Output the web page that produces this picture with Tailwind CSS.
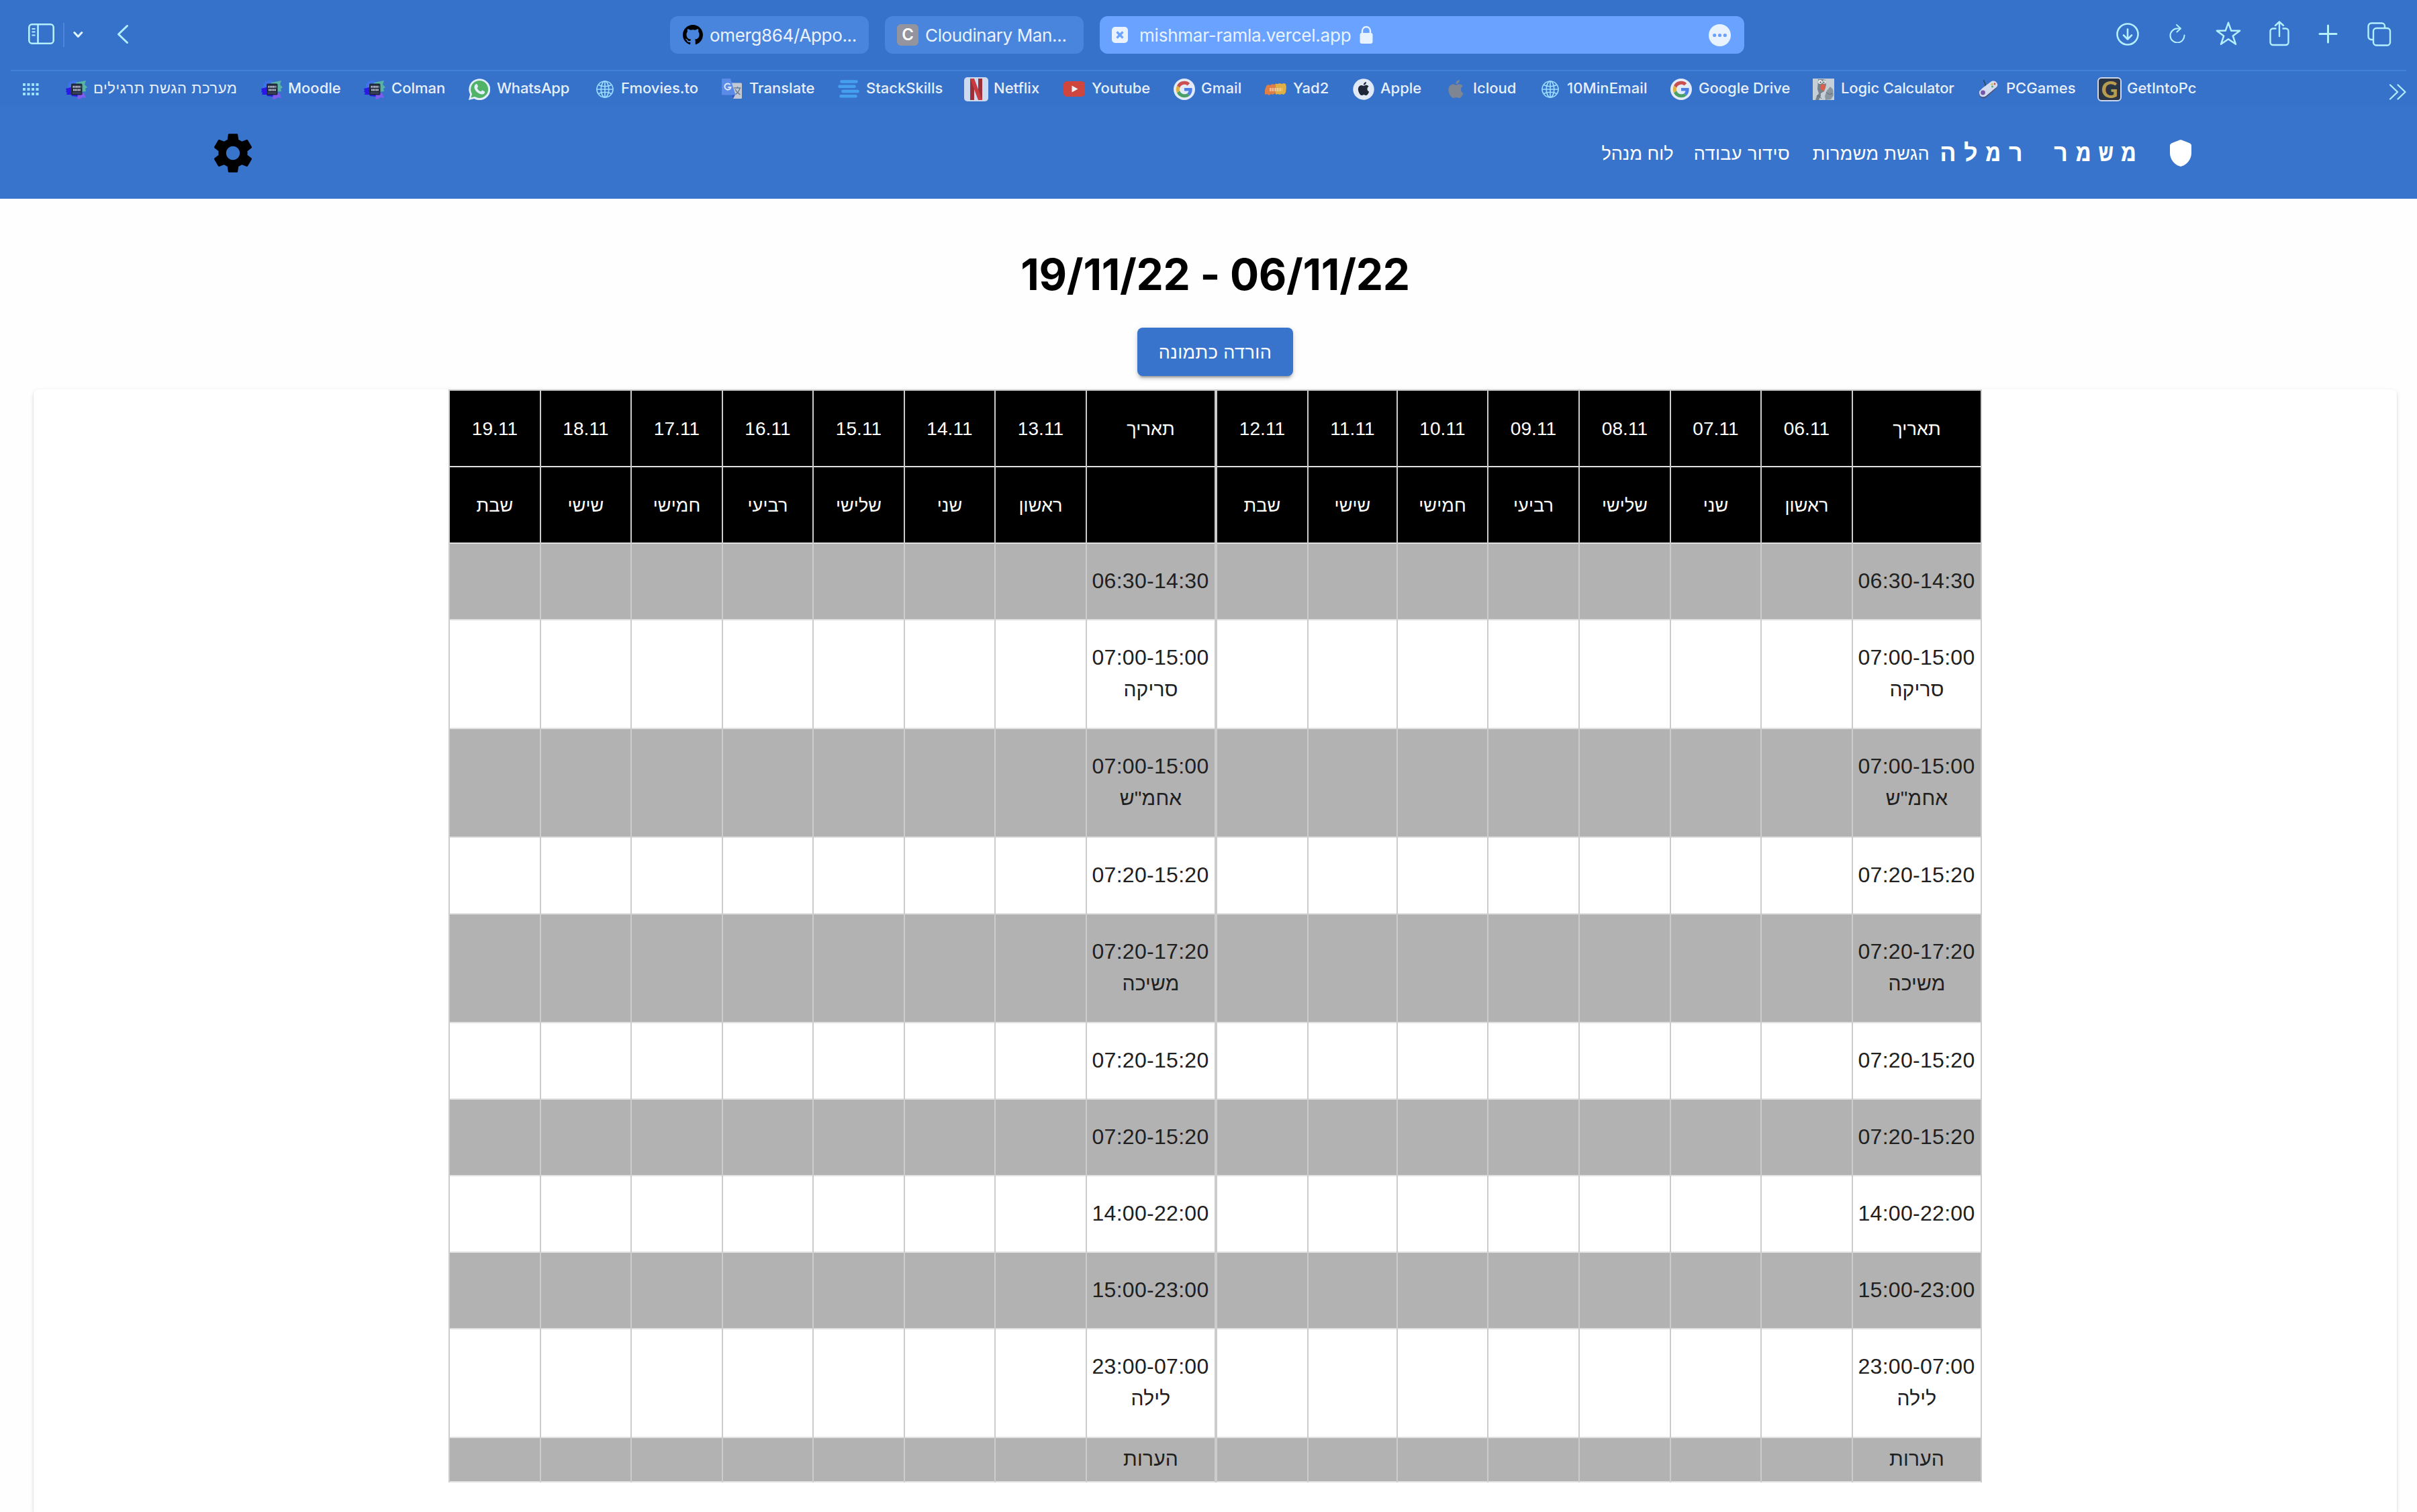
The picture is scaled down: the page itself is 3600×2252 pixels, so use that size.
<!DOCTYPE html>
<html lang="he">
<head>
<meta charset="utf-8">
<title>משמר רמלה</title>
<script src="https://cdn.jsdelivr.net/npm/@tailwindcss/browser@4"></script>
</head>
<body class="bg-white">
<svg class="hidden" xmlns="http://www.w3.org/2000/svg">
  <symbol id="college" viewBox="0 0 32 30">
    <path fill="#3f74ea" d="M4 5l2 1 0-4 3 2 2-4 2 3 3-2 3 6-2 9-13 2-1-8z"/>
    <path fill="#58b5a4" d="M15 5l15-3-2 6 4 4-3 2 1 4-9 1-7-9z"/>
    <path fill="#2a18e6" d="M0 14l8-2 6 8 5 3-1 3-9-1-1-2-7 0 1-3-2-1 1-2z"/>
    <path fill="#7f5cf0" d="M18 22l9-2 3 8-5-1-5 3-3-1z"/>
    <rect x="8" y="6.500" width="16.500" height="17" rx="1.500" fill="#20293d"/>
    <path stroke="#c9cedb" stroke-width="3" stroke-dasharray="1.600 .7" d="M10.500 11.300h12M11 16h11"/>
    <path stroke="#59627a" stroke-width="1" d="M10 20.500h12.500"/>
  </symbol>
  <symbol id="globe" viewBox="0 0 26 26">
    <g fill="none" stroke="#9bdcff" stroke-width="1.700"><circle cx="13" cy="13" r="12"/><ellipse cx="13" cy="13" rx="5.800" ry="12"/><path d="M13 1v24M1 13h24M3.500 6.500c5 3 14 3 19 0M3.500 19.500c5-3 14-3 19 0"/></g>
  </symbol>
  <symbol id="google" viewBox="0 0 32 32">
    <circle cx="16" cy="16" r="16" fill="#e3ebf8"/>
    <g transform="translate(3.800 3.800) scale(.508)">
      <path fill="#c9504f" d="M24 9.500c3.540 0 6.710 1.220 9.210 3.600l6.850-6.850C35.900 2.380 30.470 0 24 0 14.620 0 6.510 5.380 2.560 13.220l7.980 6.190C12.430 13.720 17.740 9.500 24 9.500z"/>
      <path fill="#4b7fe6" d="M46.980 24.550c0-1.570-.15-3.090-.38-4.550H24v9.020h12.940c-.58 2.960-2.260 5.480-4.780 7.180l7.730 6c4.510-4.180 7.090-10.360 7.090-17.650z"/>
      <path fill="#e0b23f" d="M10.530 28.590c-.48-1.450-.76-2.990-.76-4.590s.27-3.140.76-4.590l-7.980-6.190C.92 16.460 0 20.120 0 24c0 3.880.92 7.540 2.560 10.780l7.970-6.190z"/>
      <path fill="#4ba067" d="M24 48c6.480 0 11.930-2.130 15.890-5.810l-7.730-6c-2.150 1.450-4.920 2.300-8.160 2.300-6.260 0-11.570-4.220-13.470-9.910l-7.980 6.190C6.510 42.620 14.620 48 24 48z"/>
    </g>
  </symbol>
  <symbol id="apple" viewBox="0 0 24 24">
    <path d="M12.152 6.896c-.948 0-2.415-1.078-3.960-1.040-2.040.027-3.910 1.183-4.961 3.014-2.117 3.675-.546 9.103 1.519 12.090 1.013 1.454 2.208 3.090 3.792 3.039 1.520-.065 2.090-.987 3.935-.987 1.831 0 2.350.987 3.960.948 1.637-.026 2.676-1.480 3.676-2.948 1.156-1.688 1.636-3.325 1.662-3.415-.039-.013-3.182-1.221-3.220-4.857-.026-3.040 2.480-4.494 2.597-4.559-1.429-2.090-3.623-2.324-4.390-2.376-2-.156-3.675 1.090-4.610 1.090zM15.530 3.830c.843-1.012 1.400-2.427 1.245-3.830-1.207.052-2.662.805-3.532 1.818-.780.896-1.454 2.338-1.273 3.714 1.338.104 2.715-.688 3.559-1.701"/>
  </symbol>
</svg>

<div class="flex h-[2252px] w-[3600px] flex-col overflow-hidden bg-[#fefefe]">

  <!-- Browser chrome -->
  <div class="flex h-[159px] shrink-0 flex-col bg-[#3672ca]">
    <div class="flex h-[104px] items-start">
      <div class="flex w-[998px] shrink-0 pl-[42px] pt-[34px]">
        <svg class="h-[33px] w-[40px]" viewBox="0 0 40 33" fill="none" stroke="#b4efff" stroke-width="2.600"><rect x="1.300" y="2.300" width="36.400" height="28.400" rx="4.500"/><path d="M14.500 2v29"/><path stroke-width="2" d="M5.500 9h5M5.500 13.500h5M5.500 18.500h5"/></svg>
        <div class="ml-3 h-9 w-0.5 bg-[#4a86de]"></div>
        <svg class="ml-[13px] mt-3 h-[12px] w-[15px]" viewBox="0 0 15 12" fill="none" stroke="#dff8ff" stroke-width="3" stroke-linecap="round" stroke-linejoin="round"><path d="M1.800 2.500l5.500 6 5.500-6"/></svg>
        <svg class="ml-[50px] mt-[2px] h-[30px] w-[18px]" viewBox="0 0 18 30" fill="none" stroke="#b4efff" stroke-width="3" stroke-linecap="round" stroke-linejoin="round"><path d="M15.500 2.500L2.500 15l13 12.500"/></svg>
      </div>
      <div class="flex shrink-0 gap-6 pt-6 font-['Inter',sans-serif] text-[26px] leading-[56px] tracking-[-0.35px] text-[#e9f2ff]">
        <div class="flex h-14 w-[296px] items-center rounded-xl bg-[#4985dd] pl-[19px]">
          <svg class="h-[30px] w-[30px]" viewBox="0 0 16 16"><path d="M8 0C3.580 0 0 3.580 0 8c0 3.540 2.290 6.530 5.470 7.590.4.070.55-.17.55-.38 0-.19-.01-.82-.01-1.490-2.010.37-2.530-.49-2.690-.94-.09-.23-.48-.94-.82-1.130-.28-.15-.68-.52-.01-.53.63-.01 1.080.58 1.230.82.72 1.210 1.870.87 2.330.66.07-.52.28-.87.51-1.070-1.780-.2-3.640-.89-3.640-3.950 0-.87.31-1.590.82-2.150-.08-.2-.36-1.020.08-2.120 0 0 .67-.21 2.200.82.64-.18 1.320-.27 2-.27s1.360.09 2 .27c1.530-1.040 2.200-.82 2.200-.82.44 1.100.16 1.920.08 2.120.51.56.82 1.270.82 2.150 0 3.070-1.870 3.750-3.650 3.950.29.25.54.73.54 1.480 0 1.070-.01 1.930-.01 2.200 0 .21.15.46.55.38A8.010 8.010 0 0 0 16 8c0-4.420-3.580-8-8-8z"/></svg>
          <span class="ml-[10px] mt-0.5 whitespace-nowrap">omerg864/Appo...</span>
        </div>
        <div class="flex h-14 w-[296px] items-center rounded-xl bg-[#4985dd] pl-[18px]">
          <span class="flex h-8 w-8 items-center justify-center rounded-md bg-[#93949e] text-[24px] font-semibold leading-none text-white">C</span>
          <span class="ml-[10px] mt-0.5 whitespace-nowrap">Cloudinary Man...</span>
        </div>
        <div class="flex h-14 w-[960px] items-center rounded-xl bg-[#69a3ff] pl-[18px] pr-5">
          <svg class="h-6 w-6" viewBox="0 0 24 24"><rect width="24" height="24" rx="5" fill="#e9f2ff"/><path d="M7.500 7.500l9 9M16.500 7.500l-9 9" stroke="#69a3ff" stroke-width="3.200"/></svg>
          <span class="ml-[17px] mt-0.5 whitespace-nowrap tracking-[-0.22px]">mishmar-ramla.vercel.app</span>
          <svg class="ml-[13px] h-[28px] w-5" viewBox="0 0 20 28"><rect x="0.500" y="11" width="19" height="16" rx="3" fill="#e9f2ff"/><path d="M4 12V8a6 6 0 0 1 12 0v4" fill="none" stroke="#e9f2ff" stroke-width="2.400"/></svg>
          <svg class="ml-auto h-[33px] w-[33px]" viewBox="0 0 33 33"><circle cx="16.500" cy="16.500" r="16.500" fill="#e9f2ff"/><g fill="#69a3ff"><circle cx="8.700" cy="16.500" r="2.600"/><circle cx="16.500" cy="16.500" r="2.600"/><circle cx="24.300" cy="16.500" r="2.600"/></g></svg>
        </div>
      </div>
      <div class="ml-auto flex shrink-0 items-start pr-[38px] pt-[30px]">
        <svg class="mt-1 h-[34px] w-[34px]" viewBox="0 0 34 34" fill="none" stroke="#b4efff" stroke-width="2.600" stroke-linecap="round" stroke-linejoin="round"><circle cx="17" cy="17" r="15.500"/><path d="M17 9.500v15M11 18.500l6 6 6-6"/></svg>
        <svg class="ml-[44px] mt-[5px] h-[29px] w-[26px]" viewBox="0 0 26 29" fill="none" stroke="#b4efff" stroke-width="2.100" stroke-linecap="round" stroke-linejoin="round"><path d="M17 7.500H13a10.500 10.500 0 1 0 10.500 10"/><path d="M12 2l6 5.500-5.500 5"/></svg>
        <svg class="ml-[43px] mt-[1px] h-[37px] w-[40px]" viewBox="0 0 40 37" fill="none" stroke="#b4efff" stroke-width="2.500" stroke-linejoin="round"><path d="M20 2.800l4.300 12h12.800L26.800 22.500l4.200 12.300L20 27.300 9 34.800l4.200-12.300L2.900 14.800h12.800z"/></svg>
        <svg class="ml-[41px] mt-[1px] h-[38px] w-[30px]" viewBox="0 0 30 38" fill="none" stroke="#b4efff" stroke-width="2.400" stroke-linecap="round" stroke-linejoin="round"><path d="M9.500 11.500H5.500a4 4 0 0 0-4 4V32a4 4 0 0 0 4 4h19a4 4 0 0 0 4-4V15.500a4 4 0 0 0-4-4h-4M15 1.500V23M9 7l6-5.500L21 7"/></svg>
        <svg class="ml-[43px] mt-[6px] h-[29px] w-[29px]" viewBox="0 0 29 29" fill="none" stroke="#b4efff" stroke-width="3" stroke-linecap="round"><path d="M14.500 2v25M2 14.500h25"/></svg>
        <svg class="ml-[44px] mt-[3px] h-[36px] w-[36px]" viewBox="0 0 36 36" fill="none" stroke="#b4efff" stroke-width="2.400"><path d="M9 26H6a4.500 4.500 0 0 1-4.500-4.500V6A4.500 4.500 0 0 1 6 1.500h15.500A4.500 4.500 0 0 1 26 6v3"/><rect x="9" y="9" width="25" height="25.500" rx="4.500"/></svg>
      </div>
    </div>
    <div class="mx-4 h-0.5 bg-[#427fd9]"></div>

    <div class="flex h-[53px] items-center font-['Inter',sans-serif] text-[22px] font-medium leading-none text-[#e7effb]">
      <svg class="ml-[33px] mr-[39px] h-5 w-[26px] shrink-0" viewBox="0 0 26 20" fill="#9fe2ff"><path d="M1 1h4v4H1zM7.500 1h4v4h-4zM14 1h4v4h-4zM20.500 1h4v4h-4zM1 8h4v4H1zM7.500 8h4v4h-4zM14 8h4v4h-4zM20.500 8h4v4h-4zM1 15h4v4H1zM7.500 15h4v4h-4zM14 15h4v4h-4zM20.500 15h4v4h-4z"/></svg>
      <div class="flex w-[291px] shrink-0 items-center"><svg class="mr-[9px] h-[30px] w-8"><use href="#college"/></svg><span dir="rtl" class="mb-0.5 whitespace-nowrap font-['Liberation_Sans',sans-serif] text-[22px] tracking-[0.55px]">מערכת הגשת תרגילים</span></div>
      <div class="flex w-[153px] shrink-0 items-center"><svg class="mr-2 h-[30px] w-8"><use href="#college"/></svg><span class="mb-[3px]">Moodle</span></div>
      <div class="flex w-[156px] shrink-0 items-center"><svg class="mr-[9px] h-[30px] w-8"><use href="#college"/></svg><span class="mb-[3px]">Colman</span></div>
      <div class="flex w-[190px] shrink-0 items-center"><svg class="mr-[10px] h-8 w-8" viewBox="0 0 32 32"><path fill="#e3eefa" d="M0 32l2.200-8.200A16 16 0 1 1 8.200 30z"/><path fill="#50b368" d="M3.500 28.500l1.600-5.600A13 13 0 1 1 9.200 27z"/><path fill="#e3eefa" d="M10.500 8.500c.8-.8 1.800-.7 2.200.1l1.400 3.200c.3.700-1.500 2-1.300 2.600 1 2.200 2.800 3.900 5 4.900.7.300 1.900-2 2.700-1.700l3.200 1.600c.8.500.4 2.200-.6 3.200-1.500 1.500-4 1.400-6.600.3-3.700-1.600-6.600-4.700-7.700-8-.7-2.400-.2-4.600 1.700-6.200z"/></svg><span class="mb-[3px] tracking-[-0.2px]">WhatsApp</span></div>
      <div class="flex w-[187px] shrink-0 items-center"><svg class="mr-[11px] h-[26px] w-[26px]"><use href="#globe"/></svg><span class="mb-[3px]">Fmovies.to</span></div>
      <div class="flex w-[173px] shrink-0 items-center"><svg class="mr-[10px] h-[31px] w-[31px]" viewBox="0 0 31 31"><path fill="#c3c9d3" d="M12 6.500h16.500A1.500 1.500 0 0 1 30 8v20.500a1.500 1.500 0 0 1-1.500 1.500H17z"/><path fill="#3a50c0" d="M15 24l5 0-3 6z"/><path fill="#5b8be8" d="M1.500 0H13l7.500 24.500H1.500A1.500 1.500 0 0 1 0 23V1.500A1.500 1.500 0 0 1 1.500 0z"/><path fill="none" stroke="#dbe7fb" stroke-width="2" d="M12.500 9a4.600 4.600 0 1 0 1 4H9.300"/><path fill="none" stroke="#6b7f98" stroke-width="1.500" d="M18 14h10.500M23.500 12v2M27 14c-1 5-4 8-6.500 9.500M20 16c2 4 4 6 7.500 8"/></svg><span class="mb-[3px]">Translate</span></div>
      <div class="flex w-[188px] shrink-0 items-center"><svg class="mr-[10px] h-[27px] w-8" viewBox="0 0 32 27" stroke="#46a0f2" stroke-width="4.600" stroke-linecap="round"><path d="M5.500 2.500h22M2.500 9.800h22M7.500 17h22M4.500 24.200h22"/></svg><span class="mb-[3px]">StackSkills</span></div>
      <div class="flex w-[148px] shrink-0 items-center"><svg class="mr-2 h-9 w-9" viewBox="0 0 36 36"><rect width="36" height="36" rx="5" fill="#cddbf0"/><path fill="#9c2f38" d="M9 2h6v32H9zM21 2h6v32h-6z"/><path fill="#c63b40" d="M9 2h6l12 32h-6z"/></svg><span class="mb-[3px]">Netflix</span></div>
      <div class="flex w-[164px] shrink-0 items-center"><svg class="mr-[10px] h-[23px] w-8" viewBox="0 0 32 23"><rect width="32" height="23" rx="5" fill="#cf463f"/><path fill="#f1f3fa" d="M12.500 6.500l9 5-9 5z"/></svg><span class="mb-[3px]">Youtube</span></div>
      <div class="flex w-[136px] shrink-0 items-center"><svg class="mr-[9px] h-8 w-8"><use href="#google"/></svg><span class="mb-[3px] tracking-[0.2px]">Gmail</span></div>
      <div class="flex w-[131px] shrink-0 items-center"><svg class="mr-[10px] h-[18px] w-8" viewBox="0 0 32 18"><path fill="#e07f45" d="M2 4l3-2 3 1 3-2 3 1 3-2 1 16-3-1-3 2-3-1-3 2-3-2-3 1-1-4z"/><path fill="#dfae45" d="M16 1l3 0 3-1 3 1 3-1 3 1 1 5-1 8-3 3-3-1-3 1-3-1-3 1z"/><path stroke="#f0d9c0" stroke-width="5" stroke-dasharray="2.600 1" opacity=".7" d="M7 9.500h19"/></svg><span class="mb-[3px]">Yad2</span></div>
      <div class="flex w-[143px] shrink-0 items-center"><svg class="mr-[9px] h-8 w-8" viewBox="0 0 32 32"><circle cx="16" cy="16" r="15.700" fill="#e1e9f6"/><use href="#apple" x="6" y="5" width="20" height="20" fill="#1f2838"/></svg><span class="mb-[3px]">Apple</span></div>
      <div class="flex w-[138px] shrink-0 items-center"><svg class="-ml-[3px] mr-3 h-[27px] w-[27px]" fill="#7e8694"><use href="#apple"/></svg><span class="mb-[3px]">Icloud</span></div>
      <div class="flex w-[192px] shrink-0 items-center"><svg class="mr-3 h-[26px] w-[26px]"><use href="#globe"/></svg><span class="mb-[3px] tracking-[0.1px]">10MinEmail</span></div>
      <div class="flex w-[212px] shrink-0 items-center"><svg class="mr-[10px] h-8 w-8"><use href="#google"/></svg><span class="mb-[3px] whitespace-nowrap">Google Drive</span></div>
      <div class="flex w-[247px] shrink-0 items-center"><svg class="mr-[10px] h-8 w-8" viewBox="0 0 32 32"><rect width="32" height="32" fill="#c6ced6"/><path fill="#77838c" d="M8 1h6l5 1 1 8-3 9-5 3 0 4-3 6H4l2-6 3-4-2-6z"/><path fill="#8b979f" d="M21 18l5-6 4 4 1 9-4 6-8 1-1-6z"/><path fill="#d8604e" d="M12 9l6-1 1 6-3 5-4-3z"/><circle cx="11" cy="5" r="3" fill="#e9edf0"/><circle cx="17" cy="5" r="2.600" fill="#e9edf0"/><circle cx="11.500" cy="5.500" r="1" fill="#333"/><circle cx="16.500" cy="5.500" r="1" fill="#333"/><path fill="none" stroke="#59656e" d="M20 20c3 4 6 4 9 2M6 26c3-2 5 2 7 4"/></svg><span class="mb-[3px] whitespace-nowrap tracking-[-0.12px]">Logic Calculator</span></div>
      <div class="flex w-[177px] shrink-0 items-center"><svg class="mr-[11px] h-[30px] w-[30px]" viewBox="0 0 30 30"><path fill="none" stroke="#34425f" stroke-width="1.600" d="M10 11C12 6 7 5 8 1"/><path fill="#4a5a88" d="M1 20l5-5L18 5c4-3 9-1 10 3 1 3-1 5-4 8L12 27c-4 3-8 2-10-1-1-2-1-4-1-6z"/><path fill="#d4dcef" d="M1 18l5-5L18 4c4-3 9-1 10 3 1 3-1 5-4 7L12 24c-3 3-8 3-10 0-1-2-1-4-1-6z"/><circle cx="6.500" cy="20" r="3.400" fill="#7457a8"/><circle cx="20" cy="7.500" r="1.400" fill="#d9b94a"/><circle cx="24" cy="7" r="1.400" fill="#c9514d"/><circle cx="20.500" cy="11" r="1.400" fill="#4aa36c"/></svg><span class="mb-[3px]">PCGames</span></div>
      <div class="flex shrink-0 items-center"><span class="mr-2 flex h-9 w-9 items-center justify-center rounded-md border-2 border-[#cbd8ee] bg-[#2b3444] font-['Lato',sans-serif] text-[34px] font-black leading-none text-[#b79d4f]">G</span><span class="mb-[3px]">GetIntoPc</span></div>
      <svg class="ml-auto mr-4 mt-2 h-6 w-[26px] shrink-0" viewBox="0 0 26 24" fill="none" stroke="#b4efff" stroke-width="2.200" stroke-linecap="round" stroke-linejoin="round"><path d="M2 1.500l11 10.500L2 22.500M13.500 1.500l11 10.500-11 10.500"/></svg>
    </div>
  </div>

  <!-- Site header -->
  <header dir="rtl" class="flex h-[137px] shrink-0 items-center bg-[#3874cb] pl-[311px] pr-[336px] font-['Liberation_Sans',sans-serif] text-[27px] leading-none text-white">
    <svg class="h-10 w-8 shrink-0" viewBox="0 0 32 40" fill="#fff"><path d="M14.500.500a4 4 0 0 1 3 0l12 4.700A4 4 0 0 1 32 9v11c0 9-6.500 17-14.500 19.600a4 4 0 0 1-3 0C6.500 37 0 29 0 20V9a4 4 0 0 1 2.500-3.800z"/></svg>
    <span class="mr-[39px] mt-[6px] w-[319px] shrink-0 whitespace-nowrap font-['Liberation_Mono',monospace] text-[36px] font-bold tracking-[12px]">משמר רמלה</span>
    <nav class="mt-1 flex shrink-0 gap-[34px] whitespace-nowrap">
      <a class="w-[174px] text-center tracking-[0.35px]">הגשת משמרות</a>
      <a class="w-[138px] text-center tracking-[0.4px]">סידור עבודה</a>
      <a class="w-[110px] text-center">לוח מנהל</a>
    </nav>
    <svg class="mr-auto h-[72px] w-[72px] shrink-0" viewBox="0 0 24 24"><path d="M19.140 12.940c.04-.3.060-.61.060-.94 0-.32-.02-.64-.07-.94l2.030-1.580c.18-.14.23-.41.12-.61l-1.920-3.320c-.12-.22-.37-.29-.59-.22l-2.390.96c-.5-.38-1.030-.7-1.620-.94l-.36-2.540c-.04-.24-.24-.41-.48-.41h-3.840c-.24 0-.43.17-.47.41l-.36 2.540c-.59.24-1.130.57-1.620.94l-2.390-.96c-.22-.08-.47 0-.59.22L2.740 8.870c-.12.21-.08.47.12.61l2.030 1.580c-.05.3-.09.63-.09.94s.02.64.070.94l-2.030 1.580c-.18.14-.23.41-.12.61l1.920 3.320c.12.22.37.29.59.22l2.390-.96c.5.38 1.030.7 1.620.94l.36 2.540c.05.24.24.41.48.41h3.840c.24 0 .44-.17.47-.41l.36-2.540c.59-.24 1.130-.56 1.620-.94l2.390.96c.22.08.47 0 .59-.22l1.920-3.320c.12-.22.07-.47-.12-.61l-2.010-1.580zM12 15.400c-1.880 0-3.400-1.520-3.400-3.400s1.520-3.400 3.400-3.400 3.400 1.520 3.400 3.400-1.520 3.400-3.400 3.400z"/></svg>
  </header>

  <!-- Schedule -->
  <main class="flex grow flex-col items-center pl-[50px] pr-[30px]">
    <h1 class="mt-[73px] font-['Inter',sans-serif] text-[64px] font-bold leading-[80px] tracking-[-0.3px] text-black">19/11/22 - 06/11/22</h1>
    <button class="mt-[39px] flex h-[72px] w-[232px] shrink-0 items-center justify-center rounded-lg bg-[#3874cb] pt-0.5 font-['Liberation_Sans',sans-serif] text-[27px] leading-none tracking-[0.45px] text-white shadow-[0_6px_2px_-4px_rgba(0,0,0,0.2),0_4px_4px_0_rgba(0,0,0,0.14),0_2px_10px_0_rgba(0,0,0,0.12)]">הורדה כתמונה</button>
    <div class="mt-5 flex w-full grow justify-center rounded-t-lg bg-white shadow-[0_4px_2px_-2px_rgba(0,0,0,0.2),0_2px_2px_0_rgba(0,0,0,0.14),0_2px_6px_0_rgba(0,0,0,0.12)]">
      <div id="schedule" dir="rtl" class="flex h-[1628px] w-[2284px] font-['Liberation_Sans',sans-serif]"></div>
    </div>
  </main>
</div>

<script>
  const days = ['ראשון', 'שני', 'שלישי', 'רביעי', 'חמישי', 'שישי', 'שבת'];
  const shifts = [
    ['06:30-14:30'], ['07:00-15:00', 'סריקה'], ['07:00-15:00', 'אחמ"ש'], ['07:20-15:20'],
    ['07:20-17:20', 'משיכה'], ['07:20-15:20'], ['07:20-15:20'], ['14:00-22:00'],
    ['15:00-23:00'], ['23:00-07:00', 'לילה'], [null, 'הערות'],
  ];
  const weeks = [
    { first: 6, cols: 'grid-cols-[194px_136px_135px_136px_136px_135px_133px_136px]' },
    { first: 13, cols: 'grid-cols-[194px_136px_135px_136px_135px_136px_135px_136px]' },
  ];
  const head = (t, i, font) =>
    `<div class="flex border-[#ccc] border-l-2 ${i === 0 ? 'border-r-2' : ''}"><div class="flex grow items-center justify-center border-b-2 border-[#e0e0e0] bg-black text-white ${font}">${t}</div></div>`;
  const heb = 'pt-0.5 text-[27px] tracking-[0.1px]';
  const num = 'pt-0.5 text-[28px] tracking-[0.1px]';

  document.getElementById('schedule').innerHTML = weeks.map(w => {
    let html = head('תאריך', 0, heb);
    days.forEach((_, d) => html += head(String(w.first + d).padStart(2, '0') + '.11', d + 1, num));
    html += head('', 0, heb);
    days.forEach((d, i) => html += head(d, i + 1, heb));
    shifts.forEach(([time, label], r) => {
      for (let c = 0; c < 8; c++) {
        const text = c ? '' :
          (time ? `<span dir="ltr" class="pr-px text-[32px] leading-[48px] tracking-[0.3px]">${time}</span>` : '') +
          (label ? `<span class="text-[30px] leading-[48px] tracking-[0.2px]">${label}</span>` : '');
        html += `<div class="flex border-[#ccc] border-l-2 ${c === 0 ? 'border-r-2' : ''}"><div class="flex grow flex-col items-center justify-center whitespace-nowrap border-b-2 border-[#e0e0e0] pb-0.5 text-[#202020] ${r % 2 ? 'bg-white' : 'bg-[#b2b2b2]'}">${text}</div></div>`;
      }
    });
    return `<div class="grid shrink-0 border-t-2 border-[#ccc] ${w.cols} grid-rows-[114px_114px_114px_162px_162px_114px_162px_114px_114px_114px_114px_162px_66px]">${html}</div>`;
  }).join('');
</script>
</body>
</html>
